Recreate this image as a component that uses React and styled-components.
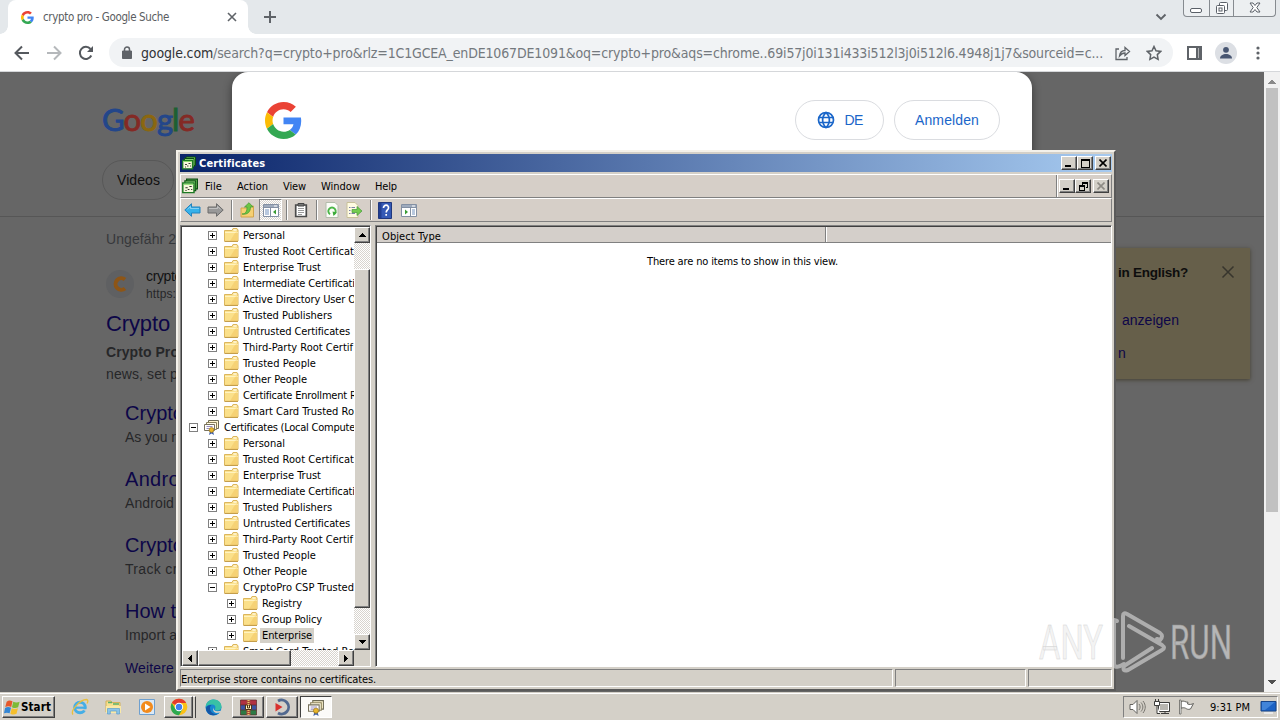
// App.jsx
import React, { useLayoutEffect, useRef } from 'react';
import styled, { createGlobalStyle, css } from 'styled-components';

const GlobalStyle = createGlobalStyle`
  * {
    box-sizing: border-box;
  }

  body {
    margin: 0;
    overflow: hidden;
    background: #666;
    font-family: 'Liberation Sans', sans-serif;
  }

  svg {
    display: block;
    flex: none;
  }
`;

const uiFont = css`
  font-family: 'DejaVu Sans Condensed', 'DejaVu Sans', sans-serif;
  font-stretch: condensed;
`;

const raised = css`
  border: 1px solid;
  border-color: #fff #404040 #404040 #fff;
  box-shadow: inset -1px -1px 0 #808080;
`;

const sunken = css`
  border: 1px solid;
  border-color: #808080 #fff #fff #808080;
`;

const dither = css`
  background-color: #fff;
  background-image: repeating-conic-gradient(#d8d4ce 0% 25%, #fff 0% 50%);
  background-size: 2px 2px;
`;

const FitText = styled.span`
  display: inline-block;
  white-space: pre;
`;

// Spaces the letters so that the text takes exactly `w` pixels.
const Fit = ({ w, children, ...rest }) => {
  const ref = useRef(null);

  useLayoutEffect(() => {
    const el = ref.current;
    el.style.letterSpacing = '0px';
    const natural = el.getBoundingClientRect().width;
    el.style.letterSpacing = `${(w - natural) / el.textContent.length}px`;
  }, [w, children]);

  return <FitText ref={ref} {...rest}>{children}</FitText>;
};

/* ---------- desktop ---------- */

const Desktop = styled.div`
  position: relative;
  display: flex;
  flex-direction: column;
  width: 1280px;
  height: 720px;
  overflow: hidden;
`;

/* ---------- browser ---------- */

const TabStrip = styled.div`
  display: flex;
  height: 34px;
  padding-left: 8px;
  background: #e4e8eb;
`;

const Tab = styled.div`
  position: relative;
  display: flex;
  align-items: center;
  width: 240px;
  height: 34px;
  padding: 0 10px 0 13px;
  border-radius: 8px 8px 0 0;
  background: #fff;

  &::before,
  &::after {
    content: '';
    position: absolute;
    bottom: 0;
    width: 8px;
    height: 8px;
  }

  &::before {
    left: -8px;
    background: radial-gradient(circle at 0 0, transparent 7.5px, #fff 8px);
  }

  &::after {
    right: -8px;
    background: radial-gradient(circle at 100% 0, transparent 7.5px, #fff 8px);
  }
`;

const TabTitle = styled.div`
  ${uiFont}
  flex: 1;
  margin-left: 9px;
  font-size: 11.5px;
  color: #5a5d61;
`;

const NewTab = styled.div`
  display: flex;
  align-items: center;
  margin-left: 15px;
`;

const StripEnd = styled.div`
  display: flex;
  margin-left: auto;
  padding-right: 4px;
`;

const CaptionGroup = styled.div`
  display: flex;
  width: 93px;
  height: 17px;
  margin-left: 16px;
  border: 1px solid #868b90;
  border-top: 0;
  border-radius: 0 0 4px 4px;
  background: #eceff1;
`;

const CaptionCell = styled.div`
  display: flex;
  align-items: center;
  justify-content: center;
  width: ${({ $w }) => $w}px;
  border-left: ${({ $first }) => ($first ? 0 : '1px solid #868b90')};
`;

const Toolbar = styled.div`
  display: flex;
  align-items: center;
  height: 38px;
  padding-left: 13px;
  background: #fff;
  border-bottom: 1px solid #d5d7da;
`;

const NavButton = styled.div`
  width: 18px;
  margin-right: 14px;
`;

const Omnibox = styled.div`
  ${uiFont}
  display: flex;
  align-items: center;
  width: 1064px;
  height: 29px;
  padding-left: 12px;
  border-radius: 15px;
  background: #f1f3f5;
  font-size: 14px;
  color: #74797e;

  svg:first-child {
    margin-right: 8px;
  }

  b {
    font-weight: normal;
    color: #303236;
  }
`;

const OmniboxIcons = styled.div`
  display: flex;
  gap: 15px;
  margin-left: 11px;

  svg + svg {
    margin-left: 0;
  }

  svg:first-child {
    margin-right: 0;
  }
`;

const ToolbarEnd = styled.div`
  display: flex;
  align-items: center;
  gap: 12px;
  margin-left: 14px;
`;

const Avatar = styled.div`
  display: flex;
  align-items: center;
  justify-content: center;
  width: 22px;
  height: 22px;
  border-radius: 50%;
  background: #dcdfe4;
`;

const Viewport = styled.div`
  position: relative;
  display: flex;
  height: 620px;
`;

const Page = styled.div`
  position: relative;
  flex: 1;
  overflow: hidden;
  background: #666;
`;

const PageHeader = styled.div`
  height: 145px;
  padding: 28px 0 0 102px;
  border-bottom: 1px solid #565656;
`;

const GoogleWord = styled.div`
  height: 46px;
  font-family: Lato, sans-serif;
  font-size: 31px;
  line-height: 39px;
  -webkit-text-stroke: 0.9px;
`;

const Letter = styled.span`
  color: ${({ $color }) => $color};
`;

const Chip = styled.div`
  width: 72px;
  height: 40px;
  margin-top: 14px;
  padding-left: 14px;
  border: 1px solid #585858;
  border-radius: 20px;
  font-size: 14px;
  line-height: 38px;
  color: #101010;
`;

const PageBody = styled.div`
  display: flex;
  justify-content: space-between;
  padding-right: 14px;
`;

const Results = styled.div`
  width: 300px;
  padding: 14px 0 0 106px;
`;

const Line = styled.div`
  height: ${({ $h }) => $h}px;
  margin-top: ${({ $mt = 0 }) => $mt}px;
  font-size: ${({ $size = 14 }) => $size}px;
  font-weight: ${({ $bold }) => ($bold ? 'bold' : 'normal')};
  line-height: ${({ $h }) => $h}px;
  color: ${({ $color = '#262729' }) => $color};
  white-space: nowrap;
`;

const Source = styled.div`
  display: flex;
  align-items: center;
  gap: 12px;
  height: 38px;
  margin-top: 18px;
`;

const Favicon = styled.div`
  display: flex;
  align-items: center;
  justify-content: center;
  width: 28px;
  height: 28px;
  border-radius: 50%;
  background: #5f6062;
`;

const SiteLinks = styled.div`
  padding-left: 19px;
`;

const LanguageCard = styled.div`
  width: 300px;
  height: 131px;
  margin-top: 31px;
  padding: 14px 13px 0 168px;
  background: #665f4a;
  box-shadow: 0 1px 4px #443f30;
`;

const CardTitle = styled.div`
  display: flex;
  align-items: center;
  justify-content: space-between;
  height: 20px;
  font-size: 13.5px;
  font-weight: bold;
  color: #0d0d0d;
`;

const Consent = styled.div`
  position: absolute;
  top: 0;
  left: 232px;
  display: flex;
  align-items: flex-start;
  width: 800px;
  height: 560px;
  padding: 28px 32px 0 33px;
  border-radius: 16px 16px 0 0;
  background: #fff;
  box-shadow: 0 3px 10px rgba(0, 0, 0, 0.45);
`;

const ConsentLogo = styled.div`
  padding-top: 2px;
`;

const ConsentButton = styled.div`
  display: flex;
  align-items: center;
  justify-content: center;
  gap: 10px;
  width: ${({ $w }) => $w}px;
  height: 40px;
  margin-left: ${({ $push }) => ($push ? 'auto' : '10px')};
  padding-bottom: 1px;
  border: 1px solid #dadce0;
  border-radius: 20px;
  font-size: 14px;
  color: #1a66c9;
`;

const PageScroll = styled.div`
  display: flex;
  flex-direction: column;
  align-items: center;
  width: 16px;
  padding: 7px 0 7px;
  background: #f1f1f1;
`;

const PageThumb = styled.div`
  width: 12px;
  height: 424px;
  margin: 4px 0 auto;
  background: #c1c1c1;
`;

/* ---------- console window ---------- */

const Window = styled.div`
  ${uiFont}
  position: absolute;
  top: 150px;
  left: 176px;
  display: flex;
  flex-direction: column;
  width: 940px;
  height: 541px;
  padding: 2px;
  border: 2px solid;
  border-color: #f4f1ea #5a5a5a #5a5a5a #f4f1ea;
  background: #d4d0c8;
  font-size: 11px;
  color: #000;
`;

const TitleBar = styled.div`
  display: flex;
  align-items: center;
  height: 18px;
  margin-bottom: 2px;
  padding: 0 1px 0 2px;
  background: linear-gradient(90deg, #0a246a, #a6caf0);
  font-weight: bold;
  color: #fff;

  svg + span {
    margin: 0 auto 0 3px;
  }
`;

const SmallButton = styled.div`
  ${raised}
  display: flex;
  align-items: center;
  justify-content: center;
  width: 16px;
  height: 14px;
  margin-left: ${({ $gap = 0 }) => $gap}px;
  background: #d4d0c8;
`;

const Band = styled.div`
  display: flex;
  align-items: center;
  height: 24px;
  border: 1px solid;
  border-color: #fff #808080 #808080 #fff;
  background: #d6cfc8;
`;

const MenuBar = styled(Band)`
  padding-left: 1px;

  svg + span {
    margin-left: 7px;
  }

  span + span {
    margin-left: 15px;
  }
`;

const ChildButtons = styled.div`
  display: flex;
  align-items: center;
  height: 100%;
  margin-left: auto;
  padding: 0 2px 0 2px;
  border-left: 1px solid #808080;
  box-shadow: inset 1px 0 0 #fff;
`;

const Tools = styled(Band)`
  margin-bottom: 3px;
`;

const Tool = styled.div`
  margin-left: ${({ $ml }) => $ml}px;
`;

const PressedTool = styled.div`
  ${sunken}
  ${dither}
  display: flex;
  align-items: center;
  justify-content: center;
  width: 23px;
  height: 22px;
  margin-left: 4px;
`;

const ToolSeparator = styled.div`
  width: 2px;
  height: 20px;
  margin-left: ${({ $ml }) => $ml}px;
  border-left: 1px solid #808080;
  border-right: 1px solid #fff;
`;

const Panes = styled.div`
  display: flex;
  gap: 4px;
  height: 442px;
`;

const Pane = styled.div`
  height: 442px;
  border: 1px solid;
  border-color: #808080 #fff #fff #808080;
  box-shadow: inset 1px 1px 0 #404040;
  background: #fff;
  padding: 1px 0 0 1px;
`;

const TreePane = styled(Pane)`
  display: grid;
  grid-template: 423px 16px / 172px 16px;
  width: 191px;
  background: #d4d0c8;
`;

const ListPane = styled(Pane)`
  flex: 1;
`;

const Tree = styled.div`
  overflow: hidden;
  background: #fff;
`;

const TreeRow = styled.div`
  display: flex;
  align-items: center;
  height: 16px;
  padding-left: ${({ $level }) => 7 + $level * 19}px;
  white-space: nowrap;
`;

const Expander = styled.div`
  display: flex;
  align-items: center;
  justify-content: center;
  width: 9px;
  height: 9px;
  margin-right: ${({ $root }) => ($root ? 6 : 7)}px;
  flex: none;
  border: 1px solid #808080;
`;

const RowLabel = styled.span`
  height: 15px;
  margin-left: ${({ $root }) => ($root ? 4 : 2)}px;
  padding: 0 2px 0 ${({ $root }) => ($root ? 0 : 2)}px;
  line-height: 15px;
  background: ${({ $selected }) => ($selected ? '#d4d0c8' : 'transparent')};
`;

const ScrollTrack = styled.div`
  ${dither}
  display: flex;
  flex-direction: ${({ $vertical }) => ($vertical ? 'column' : 'row')};
`;

const ScrollButton = styled.div`
  ${raised}
  display: flex;
  align-items: center;
  justify-content: center;
  width: 16px;
  height: 16px;
  background: #d4d0c8;
`;

const ScrollThumb = styled.div`
  ${raised}
  width: ${({ $w }) => $w}px;
  height: ${({ $h }) => $h}px;
  margin: ${({ $vertical }) => ($vertical ? '26px 0 auto' : '0 auto 0 0')};
  background: #d4d0c8;
`;

const ListHeader = styled.div`
  display: flex;
  height: 16px;
  border-bottom: 1px solid #808080;
  background: #d4cfca;
`;

const HeaderCell = styled.div`
  width: 449px;
  padding: 3px 0 0 5px;
  border-right: 1px solid #808080;
  box-shadow: 1px 0 0 #fff;
  line-height: 13px;
`;

const EmptyMessage = styled.div`
  margin-top: 12px;
  padding-right: 3px;
  text-align: center;
  line-height: 14px;
`;

const StatusBar = styled.div`
  display: flex;
  gap: 2px;
  height: 18px;
  margin-top: 2px;
`;

const StatusCell = styled.div`
  ${sunken}
  width: ${({ $w }) => $w}px;
  line-height: 19px;
  white-space: nowrap;
`;

/* ---------- taskbar ---------- */

const Taskbar = styled.div`
  ${uiFont}
  display: flex;
  align-items: center;
  height: 28px;
  padding: 1px 2px 0 2px;
  border-top: 1px solid #d4d0c8;
  box-shadow: inset 0 1px 0 #fff;
  background: #d4d0c8;
  font-size: 11px;
  color: #000;
`;

const StartButton = styled.div`
  ${raised}
  display: flex;
  align-items: center;
  width: 53px;
  height: 22px;
  padding-left: 1px;
  font-size: 11.5px;
  font-weight: bold;
`;

const QuickIcon = styled.div`
  margin-left: ${({ $ml }) => $ml}px;
`;

const TaskButton = styled.div`
  ${({ $active }) => ($active ? sunken : raised)}
  display: flex;
  align-items: center;
  justify-content: center;
  width: ${({ $w = 32 }) => $w}px;
  height: 22px;
  margin-left: ${({ $ml = 2 }) => $ml}px;
  background: ${({ $active }) => ($active ? '#fbfaf8' : '#d4d0c8')};
  border-color: ${({ $active }) => $active && '#404040 #fff #fff #404040'};
`;

const StackEdge = styled.div`
  width: 3px;
  height: 22px;
  border-right: 1px solid #404040;
  border-top: 1px solid #fff;
`;

const Tray = styled.div`
  ${sunken}
  display: flex;
  align-items: center;
  width: 155px;
  height: 22px;
  margin-left: auto;
  padding-left: 5px;
`;

const TrayIcon = styled.div`
  margin-right: ${({ $mr = 0 }) => $mr}px;
`;

const Watermark = styled.div`
  position: absolute;
  top: 604px;
  left: 1030px;
  opacity: 0.6;
`;

/* ---------- drawings ---------- */

const GoogleG = ({ size }) => (
  <svg width={size} height={size} viewBox="0 0 48 48">
    <path fill="#EA4335" d="M24 9.5c3.54 0 6.71 1.22 9.21 3.6l6.85-6.85C35.9 2.38 30.47 0 24 0 14.62 0 6.51 5.38 2.56 13.22l7.98 6.19C12.43 13.72 17.74 9.5 24 9.5z" />
    <path fill="#4285F4" d="M46.98 24.55c0-1.57-.15-3.09-.38-4.55H24v9.02h12.94c-.58 2.96-2.26 5.48-4.78 7.18l7.73 6c4.51-4.18 7.09-10.36 7.09-17.65z" />
    <path fill="#FBBC05" d="M10.53 28.59c-.48-1.45-.76-2.99-.76-4.59s.27-3.14.76-4.59l-7.98-6.19C.92 16.46 0 20.12 0 24c0 3.88.92 7.54 2.56 10.78l7.97-6.19z" />
    <path fill="#34A853" d="M24 48c6.48 0 11.93-2.13 15.89-5.81l-7.73-6c-2.15 1.45-4.92 2.3-8.16 2.3-6.26 0-11.57-4.22-13.47-9.91l-7.98 6.19C6.51 42.62 14.62 48 24 48z" />
  </svg>
);

const Stroke = ({ d, w = 16, h = 16, color = '#5f6368', width = 1.8 }) => (
  <svg width={w} height={h} viewBox={`0 0 ${w} ${h}`} fill="none" stroke={color} strokeWidth={width}>
    <path d={d} />
  </svg>
);

const Glyph = ({ d, w = 8, h = 8, color = '#000' }) => (
  <svg width={w} height={h} viewBox={`0 0 ${w} ${h}`} shapeRendering="crispEdges">
    <path d={d} fill={color} />
  </svg>
);

const MinGlyph = () => <Glyph d="M0 6h6v2H0z" />;

const CloseGlyph = ({ color = '#000' }) => (
  <Stroke w={8} h={8} color={color} width={1.6} d="M0.5 0.5l7 7M7.5 0.5l-7 7" />
);

const Folder = () => (
  <svg width="15" height="14" viewBox="0 0 15 14">
    <path d="M.5 2.500h7.500l1-2h4l1 1.500v11H.5z" fill="#fbe290" stroke="#dcb65c" />
    <path d="M1 4h12.500v9H1z" fill="#fbe08a" />
    <path d="M1 4.500h13" stroke="#fff3c0" />
    <path d="M11 5l2.500-1v9H6z" fill="#f3cc6c" opacity=".7" />
    <path d="M.5 13.400h13.500" stroke="#c09740" />
    <path d="M9.500 2h3" stroke="#fff" />
  </svg>
);

const CertIcon = ({ size = 16 }) => (
  <svg width={size} height={size} viewBox="0 0 16 16">
    <path d="M4.500 1.500h10v8h-10z" fill="#fff6cf" stroke="#6d6a55" />
    <path d="M2.500 3.500h10v7h-10z" fill="#fffbe5" stroke="#8a805a" />
    <path d="M.5 5.500h10v6H.5z" fill="#fff" stroke="#77715c" />
    <path d="M2.500 7.500h6M2.500 9.500h3" stroke="#9a8fc0" />
    <path d="M6 12l-1 4 2.500-1.500L10 16l-1-4z" fill="#3e5fa8" />
    <circle cx="7.500" cy="11" r="2.400" fill="#e8b62c" stroke="#9b741a" strokeWidth=".7" />
  </svg>
);

const ConsoleIcon = ({ size = 14 }) => (
  <svg width={size} height={size} viewBox="0 0 14 14">
    <path d="M4 1h9.500v8.500H4z" fill="#7ad05f" stroke="#0b4d12" />
    <path d="M2.500 2.500h9.500v8.500H2.500z" fill="#a6e98a" stroke="#0b4d12" />
    <path d="M.7 4.300h9.800v8.500H.7z" fill="#f6f8dc" stroke="#1d7a24" strokeWidth="1.300" />
    <path d="M1.500 5.500h8.500" stroke="#8edc6f" />
    <path d="M3 8.500h2M6.500 7.500h2M5 10h1.500M3 11h1M8 10h1" stroke="#302b2b" strokeWidth=".9" />
  </svg>
);

const Arrow = ({ fill, stroke, flip }) => (
  <svg width="17" height="14" viewBox="0 0 17 14">
    <g transform={flip ? 'translate(17 0) scale(-1 1)' : undefined}>
      <path d="M.8 7L7.500 .7v3.300h8.500v6H7.500v3.300z" fill={fill} stroke={stroke} />
      <path d="M3.500 6.200L6.500 3.500V5.500H15" stroke="#fff" strokeOpacity=".4" fill="none" />
    </g>
  </svg>
);

const ConsolePane = ({ right }) => (
  <svg width="16" height="15" viewBox="0 0 16 15">
    <path d="M.5 1.500h15v12H.5z" fill="#fff" stroke="#8390a3" />
    <path d="M1 2h14v2H1z" fill="#9fabbd" />
    <path d="M11 3h3" stroke="#fff" />
    <path d="M1 4.500h14" stroke="#8390a3" />
    <path d={right ? 'M9.500 5v8' : 'M7.500 5v8'} stroke="#8390a3" />
    <path d={right ? 'M11 7h3M11 9h3M11 11h3' : 'M2 7h4M2 9h4M2 11h4'} stroke="#7392bd" />
    <path d={right ? 'M4 6.500v5l3-2.500z' : 'M13 6.500v5L10 9z'} fill="#3a9c33" />
  </svg>
);

const FolderUp = () => (
  <svg width="15" height="16" viewBox="0 0 15 16">
    <path d="M1 6h6l1-2h5.500v11H1z" fill="#f6d073" stroke="#d2a44b" />
    <path d="M2 12C6 12 7 9 7 5H4.500L9 .7 13 5h-2.500c0 5-3 8-8.500 7z" fill="#6cc644" stroke="#3d9830" strokeWidth=".7" />
  </svg>
);

const Clipboard = () => (
  <svg width="14" height="16" viewBox="0 0 14 16">
    <path d="M1.700 3h10.600v11.500H1.700z" fill="#fff" stroke="#4b4b4b" strokeWidth="1.700" />
    <path d="M4 1.500h6V4H4z" fill="#777" stroke="#444" />
    <path d="M4 6.500h6M4 8.500h6M4 10.500h6M4 12.500h4" stroke="#9a9a9a" />
  </svg>
);

const RefreshPage = () => (
  <svg width="14" height="16" viewBox="0 0 14 16">
    <path d="M1 .5h9l3 3v12H1z" fill="#fbfcf7" stroke="#b3bcab" />
    <path d="M5 12.300A3.700 3.700 0 1 1 9 12.300" fill="none" stroke="#4cb648" strokeWidth="1.900" />
    <path d="M7.500 9.500l4.500 1-3.500 3.500z" fill="#3dac3a" />
  </svg>
);

const ExportList = () => (
  <svg width="17" height="16" viewBox="0 0 17 16">
    <path d="M1 .5h8l3 3v12H1z" fill="#fffbe2" stroke="#c8c09a" />
    <path d="M3 5.500h1.500M3 8.500h1.500M3 11.500h1.500M5.500 5.500H9M5.500 11.500H9" stroke="#7d81a8" />
    <path d="M6 7.500h5V4.500L16 9l-5 4.500v-3H6z" fill="#75cc50" stroke="#43993a" strokeWidth=".7" />
  </svg>
);

const HelpTool = () => (
  <svg width="14" height="17" viewBox="0 0 14 17">
    <path d="M.5.5h13v16H.5z" fill="#3459b5" stroke="#20377d" />
    <path d="M1 1h2.500v15H1z" fill="#213e92" />
    <path d="M5.500 6c0-4 5.500-3.500 5 0-.3 2-2.300 2-2.300 4.500M8.200 12v1.800" fill="none" stroke="#fff" strokeWidth="1.700" />
  </svg>
);

const WindowsFlag = () => (
  <svg width="17" height="17" viewBox="0 0 16 16">
    <path d="M2.500 2.500C4.500 1 6 1.200 8 2.200L6.800 7.500C5 6.500 3.300 6.500 1.200 7.600z" fill="#e6582b" />
    <path d="M8.700 2.500c2 1 4 1 6 0l-1.400 5.300c-2 1-3.800.9-5.800-.1z" fill="#7dba36" />
    <path d="M1 8.400c2-1.100 3.800-1.100 5.600-.1l-1.300 5.200C3.500 12.600 2 12.600 0 13.500z" fill="#3486d4" />
    <path d="M7.300 8.600c2 1 3.800 1 5.800.1l-1.300 5.200c-2 1-3.800 1-5.800-.1z" fill="#f6bf2c" />
  </svg>
);

const ExplorerE = () => (
  <svg width="18" height="18" viewBox="0 0 18 18">
    <circle cx="9" cy="9.500" r="5.300" fill="none" stroke="#45aee6" strokeWidth="3" />
    <path d="M5 9.700h9.500" stroke="#45aee6" strokeWidth="2.200" />
    <path d="M10.500 11.200H16v2.300z" fill="#d4d0c8" />
    <path d="M2 16.500C-1 13 9 1.500 15.500 1.500c2 .3 1.500 2.500.5 4" fill="none" stroke="#e9bf3d" strokeWidth="1.300" />
  </svg>
);

const LibraryFolder = () => (
  <svg width="17" height="16" viewBox="0 0 17 16">
    <path d="M1 2h5l1 1.500h8V13H1z" fill="#f7e08f" stroke="#d3b15b" />
    <path d="M3 3.500h4M8 5h6" stroke="#5bb06a" strokeWidth="1.500" />
    <path d="M1 7h15v7H1z" fill="#fae9a6" />
    <path d="M2.500 15V9.500h12V15h-2.800v-3H5.300v3z" fill="#8cc4e9" stroke="#5a9fcc" strokeWidth=".7" />
  </svg>
);

const MediaIcon = () => (
  <svg width="16" height="16" viewBox="0 0 16 16">
    <path d="M.5.5h15v15H.5z" fill="#dbe9f6" stroke="#6fa0cf" />
    <circle cx="8" cy="8" r="6" fill="#f28b1d" />
    <path d="M6 4.500v7L11.500 8z" fill="#fff" />
  </svg>
);

const ChromeIcon = () => (
  <svg width="18" height="18" viewBox="0 0 18 18">
    <circle cx="9" cy="9" r="8.300" fill="#fbc116" />
    <path d="M9 9L1.800 4.900A8.300 8.300 0 0 1 16.200 4.900H9z" fill="#e33b2e" />
    <path d="M1.800 4.900A8.300 8.300 0 0 0 9 17.300l3.600-6.200L9 9l-3.600 2z" fill="#2da94f" />
    <circle cx="9" cy="9" r="4.200" fill="#fff" />
    <circle cx="9" cy="9" r="3.200" fill="#3f7ff0" />
  </svg>
);

const EdgeIcon = () => (
  <svg width="17" height="17" viewBox="0 0 17 17">
    <circle cx="8.500" cy="8.500" r="8" fill="#1788d1" />
    <path d="M.6 8C1 3 5 .5 8.500.5c5 0 8 3.500 8 7 0 2.500-2 4-4.500 4-2 0-2.500-1-1.800-2 .8-1.500-.2-4-3.200-4C4 5.500 1.500 6.500.6 8z" fill="#38c1a5" />
    <path d="M5 9c0 4 3.500 6.500 7.500 6C6 18.500 1 14 1 9c.5-2 3-3.500 5.500-3C5.300 7 5 8 5 9z" fill="#1557a6" />
    <path d="M8.500 8.500c-.5 3 3 5 8 3l-1 2-4 .5c-3-.5-4-3-3-5.500z" fill="#d4d0c8" />
  </svg>
);

const ArchiveIcon = () => (
  <svg width="17" height="17" viewBox="0 0 17 17">
    <path d="M.5 1h16v5H.5z" fill="#b03142" />
    <path d="M.5 6h16v5H.5z" fill="#3b54a2" />
    <path d="M.5 11h16v5H.5z" fill="#2c7a44" />
    <path d="M.5 1h16v15H.5zM.5 6h16M.5 11h16" fill="none" stroke="#5a2a2a" strokeWidth=".7" />
    <path d="M6.500 1h4v15h-4z" fill="#a8483a" />
    <path d="M5.500 6h6v4.500h-6z" fill="#fff3c4" stroke="#4d3415" />
    <path d="M7.500 6v3h2V6" fill="none" stroke="#4d3415" />
    <path d="M8.500 1v5M8.500 11v5" stroke="#e5c668" strokeDasharray="1 1" strokeWidth="2" />
  </svg>
);

const PlayRing = () => (
  <svg width="18" height="18" viewBox="0 0 18 18">
    <path d="M5 3a7 7 0 1 1 0 12" fill="none" stroke="#51698f" strokeWidth="2.800" />
    <path d="M2.500 5v8.500L9.500 9z" fill="#d9312e" />
  </svg>
);

const Speaker = () => (
  <svg width="17" height="16" viewBox="0 0 17 16">
    <path d="M1 5.500h3l4-4v13l-4-4H1z" fill="#fff" stroke="#63625e" />
    <path d="M10 5c1.500 2 1.500 4 0 6M12 3.500c2.500 3 2.500 6 0 9M14 2c3 4 3 8 0 12" fill="none" stroke="#77756f" />
  </svg>
);

const NetworkIcon = () => (
  <svg width="16" height="16" viewBox="0 0 16 16">
    <path d="M4.500 3.500h11v9h-11z" fill="#b8b6b0" stroke="#3d3d3b" />
    <path d="M5.500 4.500h9v7h-9z" fill="none" stroke="#fff" />
    <path d="M7 14.500h8M11 12.500V15" stroke="#3d3d3b" />
    <path d="M.5 2.500h5v4h-5zM1.500 0v2.500M4.500 0v2.500M3 6.500V14.500H6" fill="#fff" stroke="#3d3d3b" />
  </svg>
);

const FlagIcon = () => (
  <svg width="17" height="16" viewBox="0 0 17 16">
    <path d="M3 2.500c3-1.500 4.500 1 7 .7L9.500 5c2 .8 4 .5 6-.5l-3 5.500c-2.500 1-4-.2-5-.8-1.500-.7-3-.5-4.500 0z" fill="#fff" stroke="#63625e" />
    <path d="M1.500 1h1.500v14H1.500z" fill="#fff" stroke="#63625e" strokeWidth=".8" />
  </svg>
);

const DesktopIcon = () => (
  <svg width="17" height="15" viewBox="0 0 17 15">
    <path d="M1 1.500h15v9.500H1z" fill="#1c62c4" stroke="#174488" />
    <path d="M2 2h13L5 10H2z" fill="#5a9be8" opacity=".6" />
    <path d="M4 13h9" stroke="#e8e8e8" strokeWidth="2" />
  </svg>
);

/* ---------- content ---------- */

const word = [
  ['G', '#23468a'], ['o', '#842a25'], ['o', '#8b670f'], ['g', '#23468a'], ['l', '#1d6031'], ['e', '#842a25'],
];

const linkColor = '#0d0648';

const siteLinks = [
  ['Crypto', 59, 'As you n', 54],
  ['Android', 71, 'Android', 49],
  ['Crypto', 59, 'Track cry', 60],
  ['How to', 62, 'Import an', 60],
];

const treeRows = [
  [1, 'Personal', 42], [1, 'Trusted Root Certificat', 111], [1, 'Enterprise Trust', 78],
  [1, 'Intermediate Certificati', 112], [1, 'Active Directory User Ob', 119], [1, 'Trusted Publishers', 89],
  [1, 'Untrusted Certificates', 107], [1, 'Third-Party Root Certif', 110], [1, 'Trusted People', 73],
  [1, 'Other People', 64], [1, 'Certificate Enrollment Re', 119], [1, 'Smart Card Trusted Roo', 117],
  [0, 'Certificates (Local Compute', 131], [1, 'Personal', 42], [1, 'Trusted Root Certificat', 111],
  [1, 'Enterprise Trust', 78], [1, 'Intermediate Certificati', 112], [1, 'Trusted Publishers', 89],
  [1, 'Untrusted Certificates', 107], [1, 'Third-Party Root Certif', 110], [1, 'Trusted People', 73],
  [1, 'Other People', 64], [1, 'CryptoPro CSP Trusted', 111], [2, 'Registry', 40],
  [2, 'Group Policy', 60], [2, 'Enterprise', 50], [1, 'Smart Card Trusted Roo', 117],
];

const openRows = ['Certificates (Local Compute', 'CryptoPro CSP Trusted'];

const menus = [['File', 17], ['Action', 31], ['View', 23], ['Window', 39], ['Help', 22]];

const Browser = () => (
  <>
    <TabStrip>
      <Tab>
        <GoogleG size={13} />
        <TabTitle><Fit w={126}>crypto pro - Google Suche</Fit></TabTitle>
        <Stroke w={12} h={12} width={1.6} d="M2 2l8 8M10 2l-8 8" />
      </Tab>
      <NewTab><Stroke w={14} h={14} width={2} d="M7 1v12M1 7h12" /></NewTab>
      <StripEnd>
        <NewTab><Stroke w={12} h={8} width={1.9} d="M1.500 1.500L6 6l4.500-4.500" /></NewTab>
        <CaptionGroup>
          <CaptionCell $w={25} $first>
            <svg width="13" height="14"><rect x=".5" y="7.500" width="11" height="4" rx="1.500" fill="#fff" stroke="#5a6068" /></svg>
          </CaptionCell>
          <CaptionCell $w={25}>
            <svg width="14" height="14" fill="#fff" stroke="#5a6068">
              <rect x="4.500" y="1.500" width="8" height="8" rx="1" />
              <rect x="1.500" y="4.500" width="8" height="8" rx="1" />
              <rect x="4" y="7" width="3" height="3" />
            </svg>
          </CaptionCell>
          <CaptionCell $w={42}>
            <svg width="12" height="12" fill="#fff" stroke="#5a6068">
              <path d="M1 1h3l2 2.500L8 1h3L7.800 5.500 11 10H8L6 7.500 4 10H1l3.200-4.500z" />
            </svg>
          </CaptionCell>
        </CaptionGroup>
      </StripEnd>
    </TabStrip>

    <Toolbar>
      <NavButton><Stroke w={18} h={16} width={2} color="#55595e" d="M16 8H3M9 1.500L2.500 8 9 14.500" /></NavButton>
      <NavButton><Stroke w={18} h={16} width={2} color="#b5b8bb" d="M2 8h13M9 1.500L15.500 8 9 14.500" /></NavButton>
      <NavButton>
        <svg width="18" height="18" viewBox="0 0 18 18">
          <path d="M14.300 11.500A6 6 0 1 1 13.500 5" fill="none" stroke="#55595e" strokeWidth="2" />
          <path d="M16 2v6h-6z" fill="#55595e" />
        </svg>
      </NavButton>
      <Omnibox>
        <svg width="12" height="14" viewBox="0 0 12 14">
          <path d="M2 5h8.500v7.500h-9V5z" fill="#5f6368" stroke="#5f6368" />
          <path d="M3.500 5V3.500a2.500 2.500 0 0 1 5 0V5" fill="none" stroke="#5f6368" strokeWidth="1.500" />
        </svg>
        <Fit w={962}>
          <b>google.com</b>/search?q=crypto+pro&amp;rlz=1C1GCEA_enDE1067DE1091&amp;oq=crypto+pro&amp;aqs=chrome..69i57j0i131i433i512l3j0i512l6.4948j1j7&amp;sourceid=c...
        </Fit>
        <OmniboxIcons>
          <Stroke w={17} h={16} width={1.3} d="M5 4H2v10.500h11V12M5.500 11c.5-4 2.500-5.500 5.500-5.500V2.500l4.500 4-4.500 4V8c-2.500 0-4 1-5.500 3z" />
          <Stroke w={16} h={16} width={1.5} d="M8 1.500l2 4.300 4.700.6-3.400 3.200.8 4.700L8 12l-4.100 2.300.8-4.700L1.300 6.400 6 5.800z" />
        </OmniboxIcons>
      </Omnibox>
      <ToolbarEnd>
        <svg width="16" height="14"><path d="M1 1h13v12H1zM10 1v12M12.500 1v12" fill="none" stroke="#5f6368" strokeWidth="2" /></svg>
        <Avatar>
          <svg width="14" height="14" fill="#485672"><circle cx="7" cy="3.800" r="2.900" /><path d="M1 12.500c0-6 12-6 12 0z" /></svg>
        </Avatar>
        <svg width="16" height="16" fill="#5f6368">
          <circle cx="9" cy="3" r="1.600" /><circle cx="9" cy="8" r="1.600" /><circle cx="9" cy="13" r="1.600" />
        </svg>
      </ToolbarEnd>
    </Toolbar>

    <Viewport>
      <Page>
        <PageHeader>
          <GoogleWord>
            <Fit w={92}>{word.map(([c, color], i) => <Letter key={i} $color={color}>{c}</Letter>)}</Fit>
          </GoogleWord>
          <Chip><Fit w={43}>Videos</Fit></Chip>
        </PageHeader>
        <PageBody>
          <Results>
            <Line $h={16} $color="#36383b"><Fit w={78}>Ungefähr 20</Fit></Line>
            <Source>
              <Favicon>
                <Stroke w={16} h={18} color="#8d5516" width={4} d="M13 4.500A5.800 5.800 0 1 0 13 13.500" />
              </Favicon>
              <div>
                <Line $h={18} $mt={2} $color="#111213"><Fit w={36}>crypto</Fit></Line>
                <Line $h={18} $size={12}><Fit w={30}>https:</Fit></Line>
              </div>
            </Source>
            <Line $h={28} $mt={7} $size={22} $color={linkColor}><Fit w={64}>Crypto</Fit></Line>
            <Line $h={22} $mt={3} $bold><Fit w={73}>Crypto Pro</Fit></Line>
            <Line $h={22}><Fit w={72}>news, set p</Fit></Line>
            <SiteLinks>
              {siteLinks.map(([title, tw, text, w], i) => (
                <React.Fragment key={i}>
                  <Line $h={26} $mt={i ? 18 : 15} $size={20} $color={linkColor}><Fit w={tw}>{title}</Fit></Line>
                  <Line $h={22}><Fit w={w}>{text}</Fit></Line>
                </React.Fragment>
              ))}
              <Line $h={22} $mt={11} $color={linkColor}><Fit w={49}>Weitere</Fit></Line>
            </SiteLinks>
          </Results>
          <LanguageCard>
            <CardTitle>
              <Fit w={70}>in English?</Fit>
              <Stroke w={18} h={18} color="#37352d" width={1.5} d="M3.500 3.500l11 11M14.500 3.500l-11 11" />
            </CardTitle>
            <Line $h={20} $mt={28} $color={linkColor}><Fit w={61}> anzeigen</Fit></Line>
            <Line $h={20} $mt={13} $color={linkColor}>n</Line>
          </LanguageCard>
        </PageBody>
        <Consent>
          <ConsentLogo><GoogleG size={37} /></ConsentLogo>
          <ConsentButton $w={89} $push>
            <Stroke w={18} h={18} color="#1a66c9" width={1.7} d="M9 1.500a7.500 7.500 0 1 0 0 15a7.500 7.500 0 1 0 0-15zM9 1.500c-4.500 4-4.500 11 0 15c4.500-4 4.500-11 0-15zM2 6.500h14M2 11.500h14" />
            <Fit w={18}>DE</Fit>
          </ConsentButton>
          <ConsentButton $w={106}><Fit w={64}>Anmelden</Fit></ConsentButton>
        </Consent>
      </Page>
      <PageScroll>
        <Glyph w={8} h={5} color="#8a8a8a" d="M4 0l4 5H0z" />
        <PageThumb />
        <Glyph w={8} h={5} color="#505050" d="M0 0h8L4 5z" />
      </PageScroll>
    </Viewport>
  </>
);

const Console = () => (
  <Window>
    <TitleBar>
      <ConsoleIcon />
      <Fit w={66}>Certificates</Fit>
      <SmallButton><MinGlyph /></SmallButton>
      <SmallButton><Glyph w={9} h={9} d="M0 0h9v9H0zM1 2v6h7V2z" /></SmallButton>
      <SmallButton $gap={2}><CloseGlyph /></SmallButton>
    </TitleBar>

    <MenuBar>
      <ConsoleIcon size={16} />
      {menus.map(([name, w]) => <Fit key={name} w={w}>{name}</Fit>)}
      <ChildButtons>
        <SmallButton><MinGlyph /></SmallButton>
        <SmallButton><Glyph w={9} h={9} d="M3 0h6v6H7V5h1V2H4v1H3zM0 3h6v6H0zM1 5v3h4V5z" /></SmallButton>
        <SmallButton $gap={2}><CloseGlyph color="#8d8a84" /></SmallButton>
      </ChildButtons>
    </MenuBar>

    <Tools>
      <Tool $ml={3}><Arrow fill="#35b1ea" stroke="#2382bd" /></Tool>
      <Tool $ml={6}><Arrow fill="#989898" stroke="#6b6b6b" flip /></Tool>
      <ToolSeparator $ml={7} />
      <Tool $ml={7}><FolderUp /></Tool>
      <PressedTool><ConsolePane /></PressedTool>
      <ToolSeparator $ml={4} />
      <Tool $ml={6}><Clipboard /></Tool>
      <ToolSeparator $ml={8} />
      <Tool $ml={7}><RefreshPage /></Tool>
      <Tool $ml={7}><ExportList /></Tool>
      <ToolSeparator $ml={7} />
      <Tool $ml={6}><HelpTool /></Tool>
      <Tool $ml={9}><ConsolePane right /></Tool>
    </Tools>

    <Panes>
      <TreePane>
        <Tree>
          {treeRows.map(([level, name, w], i) => (
            <TreeRow key={i} $level={level}>
              <Expander $root={!level}>
                <Glyph w={5} h={5} d={openRows.includes(name) ? 'M0 2h5v1H0z' : 'M0 2h5v1H0zM2 0h1v5H2z'} />
              </Expander>
              {level ? <Folder /> : <CertIcon />}
              <RowLabel $root={!level} $selected={level === 2 && name === 'Enterprise'}>
                <Fit w={w}>{name}</Fit>
              </RowLabel>
            </TreeRow>
          ))}
        </Tree>
        <ScrollTrack $vertical>
          <ScrollButton><Glyph w={7} h={4} d="M3 0h1v1h1v1h1v1h1v1H0V3h1V2h1V1h1z" /></ScrollButton>
          <ScrollThumb $vertical $w={16} $h={339} />
          <ScrollButton><Glyph w={7} h={4} d="M0 0h7v1H6v1H5v1H4v1H3V3H2V2H1V1H0z" /></ScrollButton>
        </ScrollTrack>
        <ScrollTrack>
          <ScrollButton><Glyph w={4} h={7} d="M0 3h1V2h1V1h1V0h1v7H3V6H2V5H1V4H0z" /></ScrollButton>
          <ScrollThumb $w={93} $h={16} />
          <ScrollButton><Glyph w={4} h={7} d="M0 0h1v1h1v1h1v1h1v1H3v1H2v1H1v1H0z" /></ScrollButton>
        </ScrollTrack>
      </TreePane>
      <ListPane>
        <ListHeader>
          <HeaderCell><Fit w={59}>Object Type</Fit></HeaderCell>
        </ListHeader>
        <EmptyMessage><Fit w={191}>There are no items to show in this view.</Fit></EmptyMessage>
      </ListPane>
    </Panes>

    <StatusBar>
      <StatusCell $w={713}><Fit w={195}>Enterprise store contains no certificates.</Fit></StatusCell>
      <StatusCell $w={131} />
      <StatusCell $w={84} />
    </StatusBar>
  </Window>
);

const App = () => (
  <Desktop>
    <GlobalStyle />
    <Browser />
    <Taskbar>
      <StartButton><WindowsFlag /><Fit w={30}>Start</Fit></StartButton>
      <QuickIcon $ml={16}><ExplorerE /></QuickIcon>
      <QuickIcon $ml={16}><LibraryFolder /></QuickIcon>
      <QuickIcon $ml={17}><MediaIcon /></QuickIcon>
      <TaskButton $w={29} $ml={9}><ChromeIcon /></TaskButton>
      <StackEdge />
      <QuickIcon $ml={9}><EdgeIcon /></QuickIcon>
      <TaskButton $ml={10}><ArchiveIcon /></TaskButton>
      <TaskButton><PlayRing /></TaskButton>
      <TaskButton $active><CertIcon size={17} /></TaskButton>
      <Tray>
        <TrayIcon $mr={8}><Speaker /></TrayIcon>
        <TrayIcon $mr={8}><NetworkIcon /></TrayIcon>
        <TrayIcon $mr={15}><FlagIcon /></TrayIcon>
        <Fit w={40}>9:31 PM</Fit>
        <TrayIcon />
        <QuickIcon $ml={10}><DesktopIcon /></QuickIcon>
      </Tray>
    </Taskbar>
    <Console />
    <Watermark>
      <svg width="206" height="74" viewBox="0 0 206 74" fontFamily="Roboto, sans-serif" fontSize="49">
        <g fill="#ececec" stroke="#b4b4b4" strokeWidth=".5">
          <text x="9" y="55" textLength="64" lengthAdjust="spacingAndGlyphs">ANY</text>
          <text x="140" y="55" textLength="62" lengthAdjust="spacingAndGlyphs">RUN</text>
        </g>
        <g fill="none" stroke="#dedede" strokeWidth="4" strokeLinecap="round" strokeLinejoin="round">
          <path d="M87 17l-3-1v45q2 4 10-1" />
          <path d="M93 54V12q0-4 4-2l33 19q4 3 0 7l-3-1" />
          <path d="M99 22l33 19q4 3 0 5L98 66q-6 2-4-4l28-18" />
        </g>
      </svg>
    </Watermark>
  </Desktop>
);

export default App;
